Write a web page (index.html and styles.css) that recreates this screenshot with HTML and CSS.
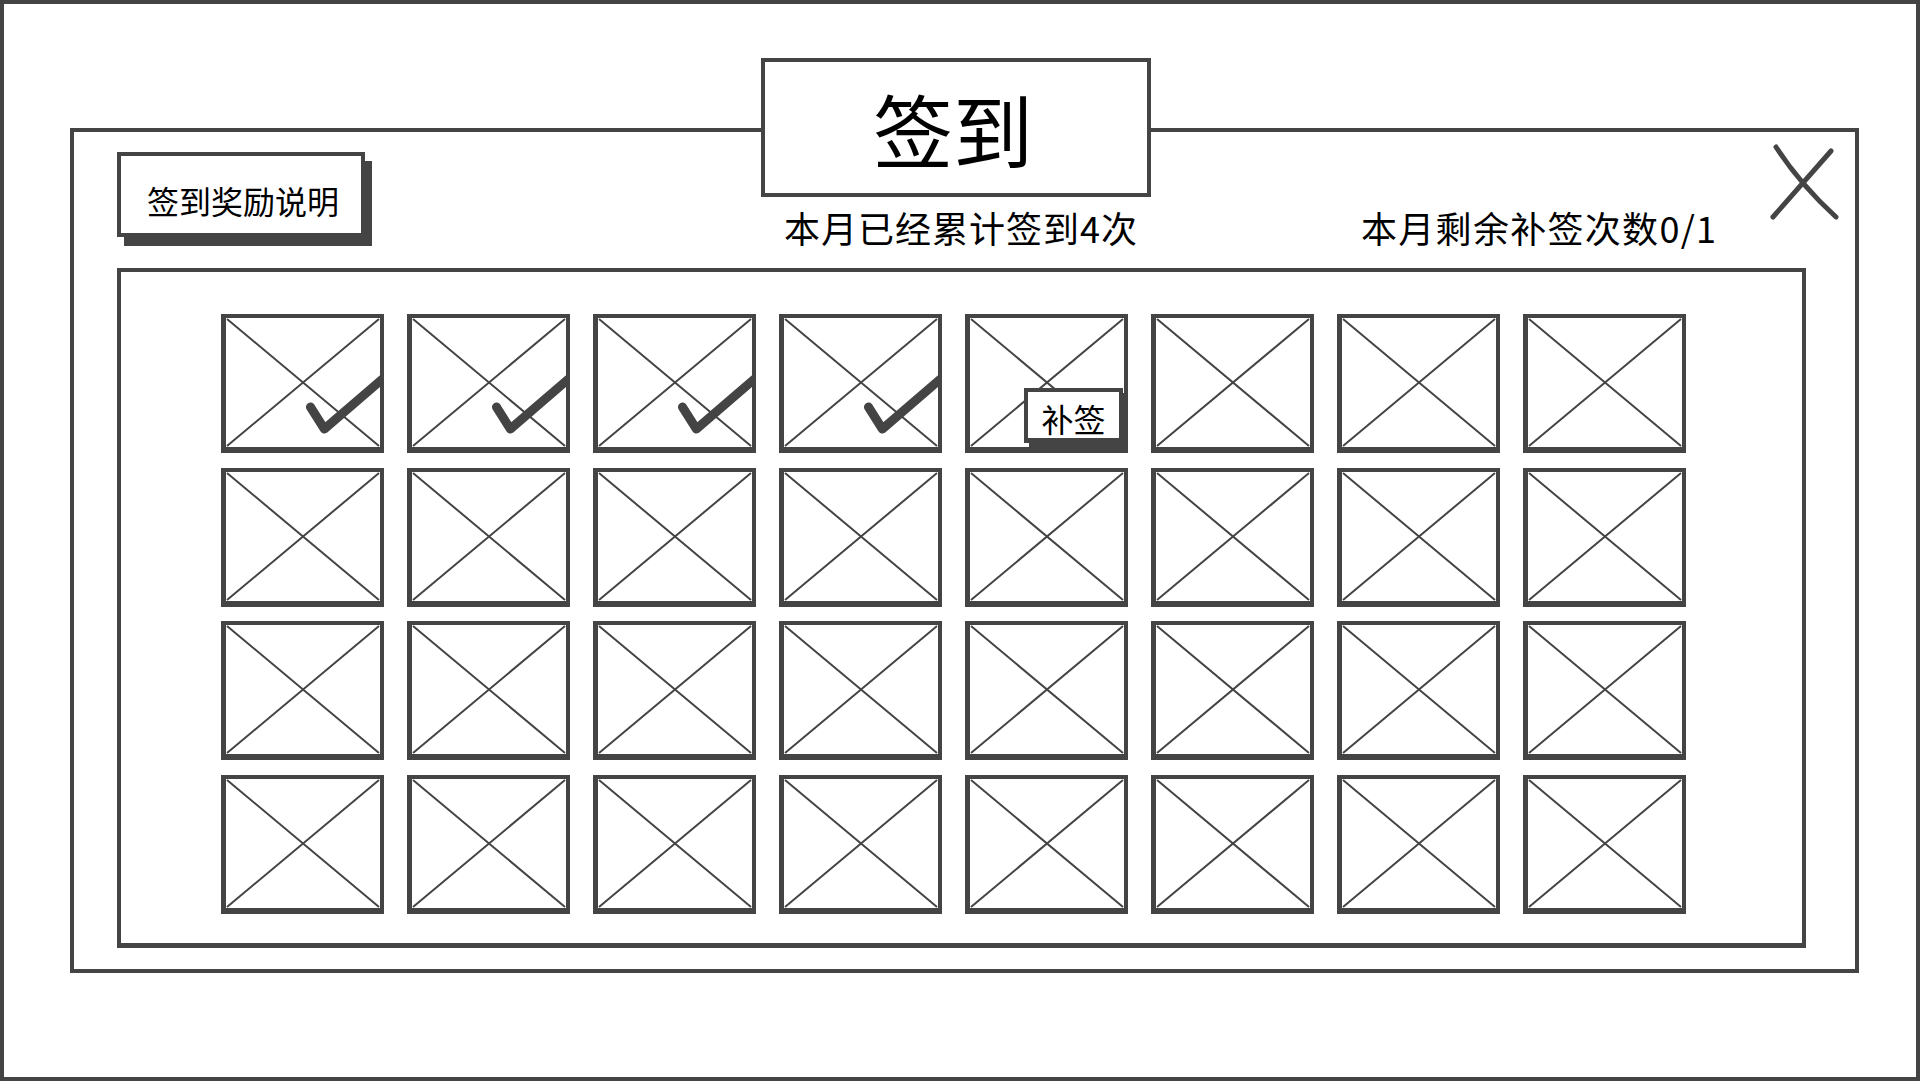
FILE: index.html
```html
<!DOCTYPE html>
<html lang="zh-CN">
<head>
    <meta charset="UTF-8">
    <meta name="viewport" content="width=device-width, initial-scale=1.0">
    <title>签到</title>
    <link rel="stylesheet" href="styles.css">
</head>
<body>
    <div class="screen">
        <div class="dialog">
            <div class="dialog-title">签到</div>

            <div class="dialog-header">
                <button type="button" class="reward-btn">签到奖励说明</button>
                <div class="status status-total">本月已经累计签到4次</div>
                <div class="status status-left">本月剩余补签次数0/1</div>
                <svg class="close-btn" width="70" height="80" viewBox="0 0 70 80">
                    <path d="M6 3 Q 30 40 66 73" />
                    <path d="M61 7 L3 73" />
                </svg>
            </div>

            <div class="calendar">
                <div class="days" id="days"></div>
            </div>
        </div>
    </div>

    <script>
        // 4 days signed, day 5 can be re-signed
        var signed = 4;
        var html = "";
        for (var i = 0; i < 32; i++) {
            html += "<div class='day'>";
            html += "<svg class='day-pic' viewBox='0 0 155 129' preserveAspectRatio='none'>";
            html += "<path class='cross' d='M1 1 L154 128 M154 1 L1 128' />";
            if (i < signed) {
                html += "<path class='tick' d='M85 89 L99 111 L168 52' />";
            }
            html += "</svg>";
            if (i == signed) {
                html += "<div class='resign'>补签</div>";
            }
            html += "</div>";
        }
        document.getElementById('days').innerHTML = html;
    </script>
</body>
</html>
```

FILE: styles.css
```css
body {
    margin: 0;
    padding: 0;
    background-color: #fff;
    color: #000;
    font-family: "Noto Sans CJK SC", "Noto Sans", sans-serif;
}

.screen {
    width: 1920px;
    height: 1081px;
    box-sizing: border-box;
    border: 4px solid #444;
    overflow: hidden;
}

.dialog {
    position: relative;
    width: 1789px;
    height: 845px;
    margin: 124px 0 0 66px;
    box-sizing: border-box;
    border: 4px solid #444;
}

.dialog-title {
    position: absolute;
    top: -74px;
    left: 687px;
    width: 390px;
    height: 139px;
    box-sizing: border-box;
    border: 4px solid #444;
    background-color: #fff;
    font-size: 80px;
    line-height: 131px;
    text-align: center;
    padding-right: 6px;
}

.dialog-header {
    display: flex;
    align-items: flex-start;
    height: 136px;
    padding-left: 43px;
}

.reward-btn {
    width: 248px;
    height: 85px;
    margin-top: 20px;
    padding: 12px 0 0 4px;
    box-sizing: border-box;
    border: 4px solid #444;
    background-color: #fff;
    box-shadow: 7px 9px 0 #444;
    font-family: inherit;
    font-size: 32px;
    line-height: 65px;
    color: #000;
    text-align: center;
}

.status {
    margin-top: 73px;
    font-size: 36px;
    line-height: 44px;
    white-space: nowrap;
}

.status-total {
    width: 420px;
    margin-left: 419px;
    letter-spacing: 1px;
}

.status-left {
    margin-left: 157px;
    letter-spacing: 1.3px;
}

.close-btn {
    margin: 12px 15px 0 auto;
    fill: none;
    stroke: #444;
    stroke-width: 5;
    stroke-linecap: round;
}

.calendar {
    width: 1689px;
    height: 680px;
    margin-left: 43px;
    box-sizing: border-box;
    border: 4px solid #444;
    border-bottom-width: 5px;
    padding: 42px 0 0 100px;
}

.days {
    display: grid;
    grid-template-columns: repeat(8, 163px);
    grid-auto-rows: 139px;
    column-gap: 23px;
    row-gap: 14.5px;
}

.day {
    position: relative;
    box-sizing: border-box;
    border: 4px solid #444;
    border-left-width: 5px;
    border-right-width: 4px;
    border-bottom-width: 6px;
}

.day-pic {
    display: block;
    width: 100%;
    height: 100%;
    fill: none;
    stroke: #444;
}

.cross {
    stroke-width: 2;
}

.tick {
    stroke-width: 9;
    stroke-linecap: round;
    stroke-linejoin: round;
}

.resign {
    position: absolute;
    top: 70px;
    left: 54px;
    width: 99px;
    height: 55px;
    box-sizing: border-box;
    border: 4px solid #444;
    border-bottom-width: 5px;
    padding-top: 6px;
    background-color: #fff;
    box-shadow: 5px 5px 0 #444;
    font-size: 32px;
    line-height: 40px;
    text-align: center;
}
```
